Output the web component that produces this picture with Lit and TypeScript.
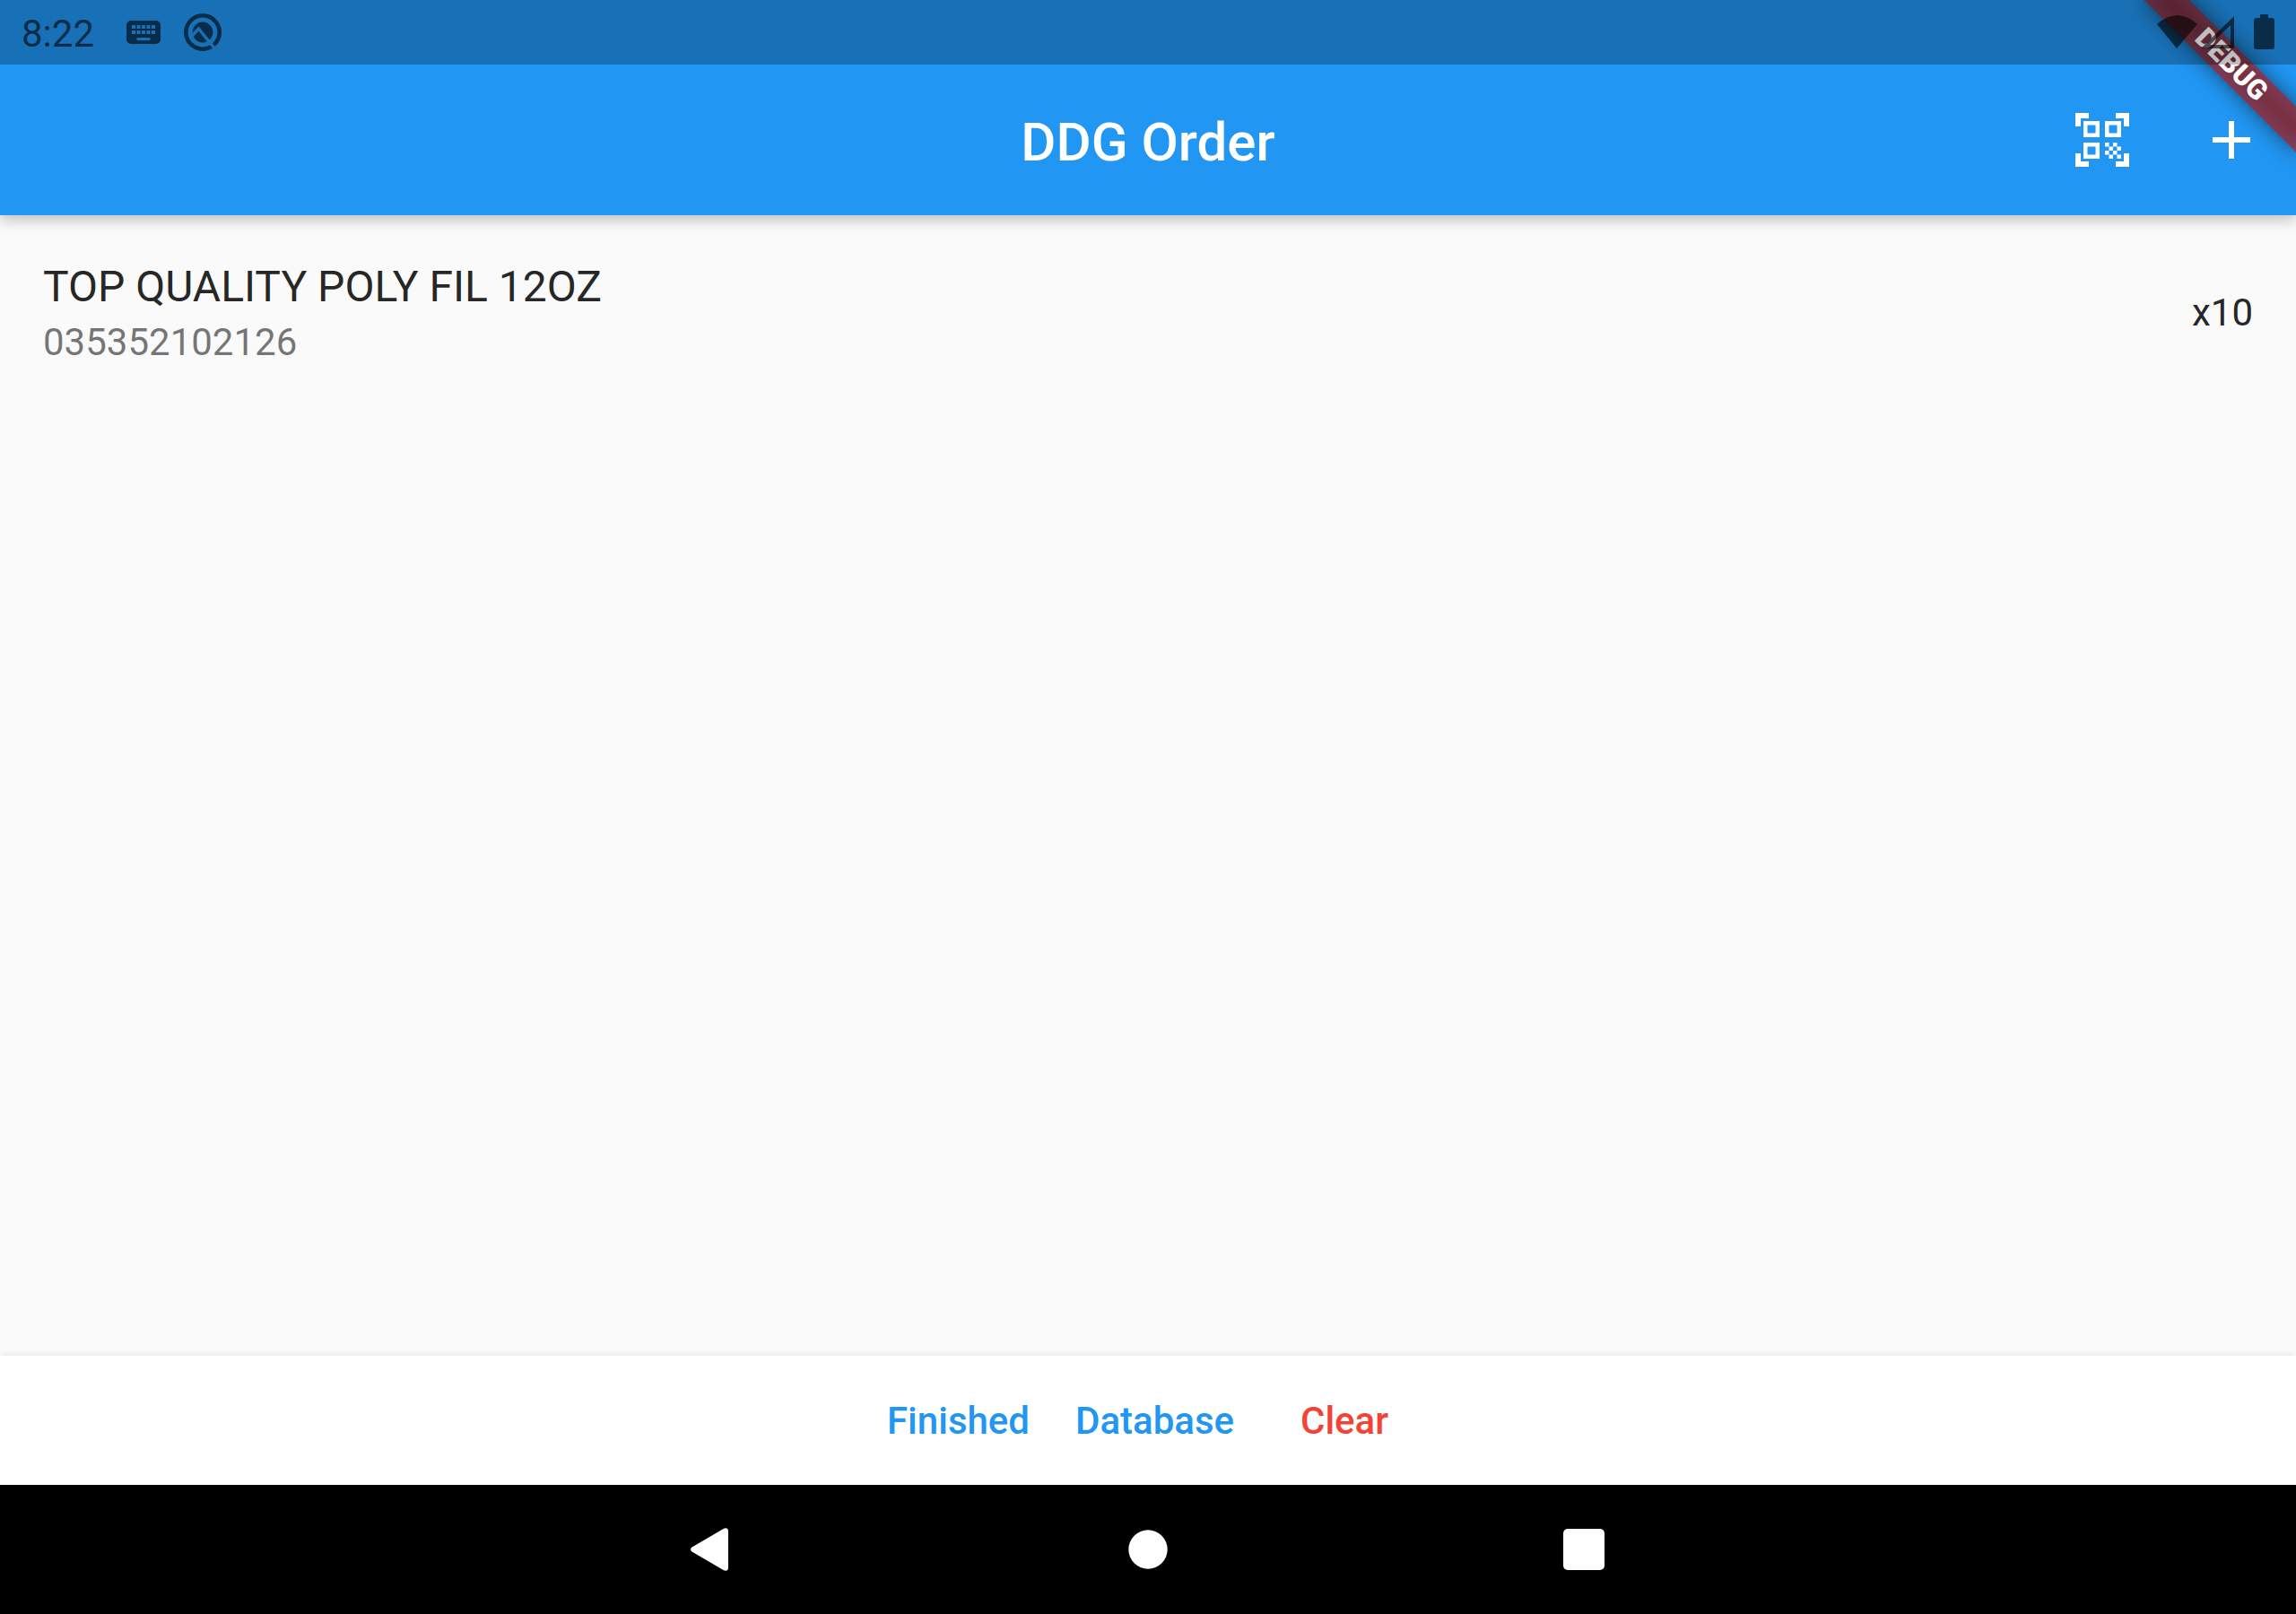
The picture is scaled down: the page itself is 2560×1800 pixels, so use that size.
import { LitElement, html, css, svg } from "lit";
import { customElement, state } from "lit/decorators.js";

interface OrderItem {
  name: string;
  code: string;
  quantity: number;
}

const keyboardIcon = svg`
  <path fill-rule="evenodd" d="M5 0H33a5 5 0 0 1 5 5V21a5 5 0 0 1-5 5H5a5 5 0 0 1-5-5V5a5 5 0 0 1 5-5Z
    M6 5v4h4v-4Z M11.500 5v4h4v-4Z M17 5v4h4v-4Z M22.500 5v4h4v-4Z M28 5v4h4v-4Z
    M6 11v4h4v-4Z M11.500 11v4h4v-4Z M17 11v4h4v-4Z M22.500 11v4h4v-4Z M28 11v4h4v-4Z
    M11.500 19v3h15v-3Z"/>`;

const qrIcon = svg`
  <path d="M9.500 6.500v3h-3v-3H9.500M11 5H5v6h6V5ZM9.500 14.500v3h-3v-3H9.500M11 13H5v6h6V13ZM17.500 6.500v3h-3v-3H17.500M19 5h-6v6h6V5ZM13 13h1.500v1.500H13ZM14.500 14.500H16V16h-1.500ZM16 13h1.500v1.500H16ZM13 16h1.500v1.500H13ZM14.500 17.500H16V19h-1.500ZM16 16h1.500v1.500H16ZM17.500 14.500H19V16h-1.500ZM17.500 17.500H19V19h-1.500ZM22 7h-2V4h-3V2h5ZM22 22v-5h-2v3h-3v2ZM2 22h5v-2H4v-3H2ZM2 2v5h2V4h3V2Z" fill-rule="evenodd"/>`;

@customElement("app-root")
export class AppRoot extends LitElement {
  static styles = css`
    :host {
      position: relative;
      display: flex;
      flex-direction: column;
      min-height: 100vh;
      overflow: hidden;
      background: #fafafa;
      color: rgba(0, 0, 0, 0.87);
      font-family: Roboto, "Liberation Sans", sans-serif;
      font-size: 42px;
      line-height: 48px;
    }
    svg {
      display: block;
      fill: currentColor;
    }
    button {
      display: flex;
      align-items: center;
      justify-content: center;
      border: 0;
      margin: 0;
      padding: 0;
      background: none;
      color: inherit;
      font: inherit;
      cursor: pointer;
    }
    .status {
      position: relative;
      z-index: 3;
      display: flex;
      align-items: center;
      justify-content: space-between;
      height: 72px;
      padding: 0 24px;
      background: rgba(0, 0, 0, 0.25);
      color: rgba(0, 0, 0, 0.6);
    }
    .status-group {
      display: flex;
      align-items: center;
    }
    .clock {
      padding-top: 4px;
    }
    .notices {
      display: flex;
      align-items: center;
      gap: 26px;
      padding-left: 36px;
    }
    .top {
      position: relative;
      background: #2196f3;
      box-shadow: 0 6px 14px rgba(0, 0, 0, 0.22);
    }
    .app-bar {
      display: grid;
      grid-template-columns: 1fr auto 1fr;
      align-items: center;
      height: 168px;
      color: #fff;
    }
    .title {
      grid-column: 2;
      margin: 0;
      padding-top: 6px;
      font-size: 60px;
      line-height: 72px;
      font-weight: 500;
    }
    .actions {
      display: flex;
      justify-content: flex-end;
    }
    .action {
      width: 144px;
      height: 144px;
    }
    .banner {
      position: absolute;
      z-index: 2;
      top: 0;
      right: -120px;
      width: 240px;
      height: 120px;
      padding-top: 84px;
      box-sizing: border-box;
      transform: rotate(45deg);
      transform-origin: 50% 0;
      pointer-events: none;
    }
    .banner-shadow {
      height: 36px;
      background: rgba(0, 0, 0, 0.5);
      filter: blur(12px);
    }
    .banner-label {
      position: absolute;
      inset: 84px 0 0 0;
      background: rgba(183, 28, 28, 0.63);
      color: #fff;
      font-size: 31px;
      line-height: 36px;
      font-weight: 900;
      text-align: center;
    }
    .orders {
      flex: 1;
      margin: 0;
      padding: 0;
      list-style: none;
    }
    .order {
      display: flex;
      align-items: center;
      justify-content: space-between;
      box-sizing: border-box;
      height: 216px;
      padding: 2px 48px 0;
    }
    .order-text {
      display: flex;
      flex-direction: column;
      gap: 10px;
    }
    .order-name {
      font-size: 48px;
      line-height: 56px;
    }
    .order-code {
      color: rgba(0, 0, 0, 0.54);
    }
    .footer {
      display: flex;
      justify-content: center;
      gap: 3px;
      height: 144px;
      background: #fff;
      box-shadow: 0 0 8px rgba(0, 0, 0, 0.1);
    }
    .text-button {
      min-width: 192px;
      padding: 2px 24px 0;
      color: #2196f3;
      font-weight: 500;
    }
    .danger {
      color: #f44336;
    }
    .system-nav {
      position: relative;
      display: flex;
      justify-content: center;
      height: 144px;
      background: #000;
      color: #fff;
    }
    .nav-button {
      width: 19%;
    }
  `;

  @state() private items: OrderItem[] = [
    { name: "TOP QUALITY POLY FIL 12OZ", code: "035352102126", quantity: 10 },
  ];

  render() {
    return html`
      <header class="top">
        <div class="status">
          <div class="status-group">
            <time class="clock">8:22</time>
            <div class="notices">
              <svg width="38" height="26" viewBox="0 0 38 26" aria-hidden="true">${keyboardIcon}</svg>
              <svg width="42" height="42" viewBox="0 0 42 42" aria-hidden="true">
                <mask id="slash" maskUnits="userSpaceOnUse" x="0" y="0" width="42" height="42">
                  <rect width="42" height="42" fill="#fff"/>
                  <path d="M9 25L16.500 17L36 41" fill="none" stroke="#000" stroke-width="3.400"/>
                </mask>
                <g mask="url(#slash)">
                  <circle cx="21" cy="21" r="18.700" fill="none" stroke="currentColor" stroke-width="4.600"/>
                  <circle cx="21" cy="21" r="11.400"/>
                </g>
              </svg>
            </div>
          </div>
          <svg width="132" height="40" viewBox="0 0 132 40" aria-hidden="true">
            <path d="M1 11Q23 -9 46 11L23 38Z"/>
            <path fill-rule="evenodd" d="M87 2V38H50ZM83 12L60 34H83Z"/>
            <path d="M116 0h9v4h4a3 3 0 0 1 3 3V36a3 3 0 0 1-3 3H112a3 3 0 0 1-3-3V7a3 3 0 0 1 3-3h4Z"/>
          </svg>
        </div>
        <div class="app-bar">
          <h1 class="title">DDG Order</h1>
          <div class="actions">
            <button class="action" aria-label="Scan code">
              <svg width="72" height="72" viewBox="0 0 24 24">${qrIcon}</svg>
            </button>
            <button class="action" aria-label="Add item">
              <svg width="72" height="72" viewBox="0 0 24 24"><path d="M19 13h-6v6h-2v-6H5v-2h6V5h2v6h6z"/></svg>
            </button>
          </div>
        </div>
        <div class="banner">
          <div class="banner-shadow"></div>
          <div class="banner-label">DEBUG</div>
        </div>
      </header>
      <ul class="orders">
        ${this.items.map(
          (item) => html`
            <li class="order">
              <div class="order-text">
                <span class="order-name">${item.name}</span>
                <span class="order-code">${item.code}</span>
              </div>
              <span>x${item.quantity}</span>
            </li>
          `,
        )}
      </ul>
      <footer class="footer">
        <button class="text-button">Finished</button>
        <button class="text-button">Database</button>
        <button class="text-button danger" @click=${() => (this.items = [])}>Clear</button>
      </footer>
      <nav class="system-nav">
        <button class="nav-button" aria-label="Back">
          <svg width="48" height="48" viewBox="0 0 48 48">
            <path d="M1.500 21.500L37 .7Q42 -1 42 4V44Q42 49 37 47.300L1.500 26.500Q-1.500 24 1.500 21.500Z"/>
          </svg>
        </button>
        <button class="nav-button" aria-label="Home">
          <svg width="44" height="44" viewBox="0 0 44 44"><circle cx="22" cy="22" r="21.700"/></svg>
        </button>
        <button class="nav-button" aria-label="Recent apps">
          <svg width="46" height="46" viewBox="0 0 46 46"><rect width="46" height="46" rx="5"/></svg>
        </button>
      </nav>
    `;
  }
}
